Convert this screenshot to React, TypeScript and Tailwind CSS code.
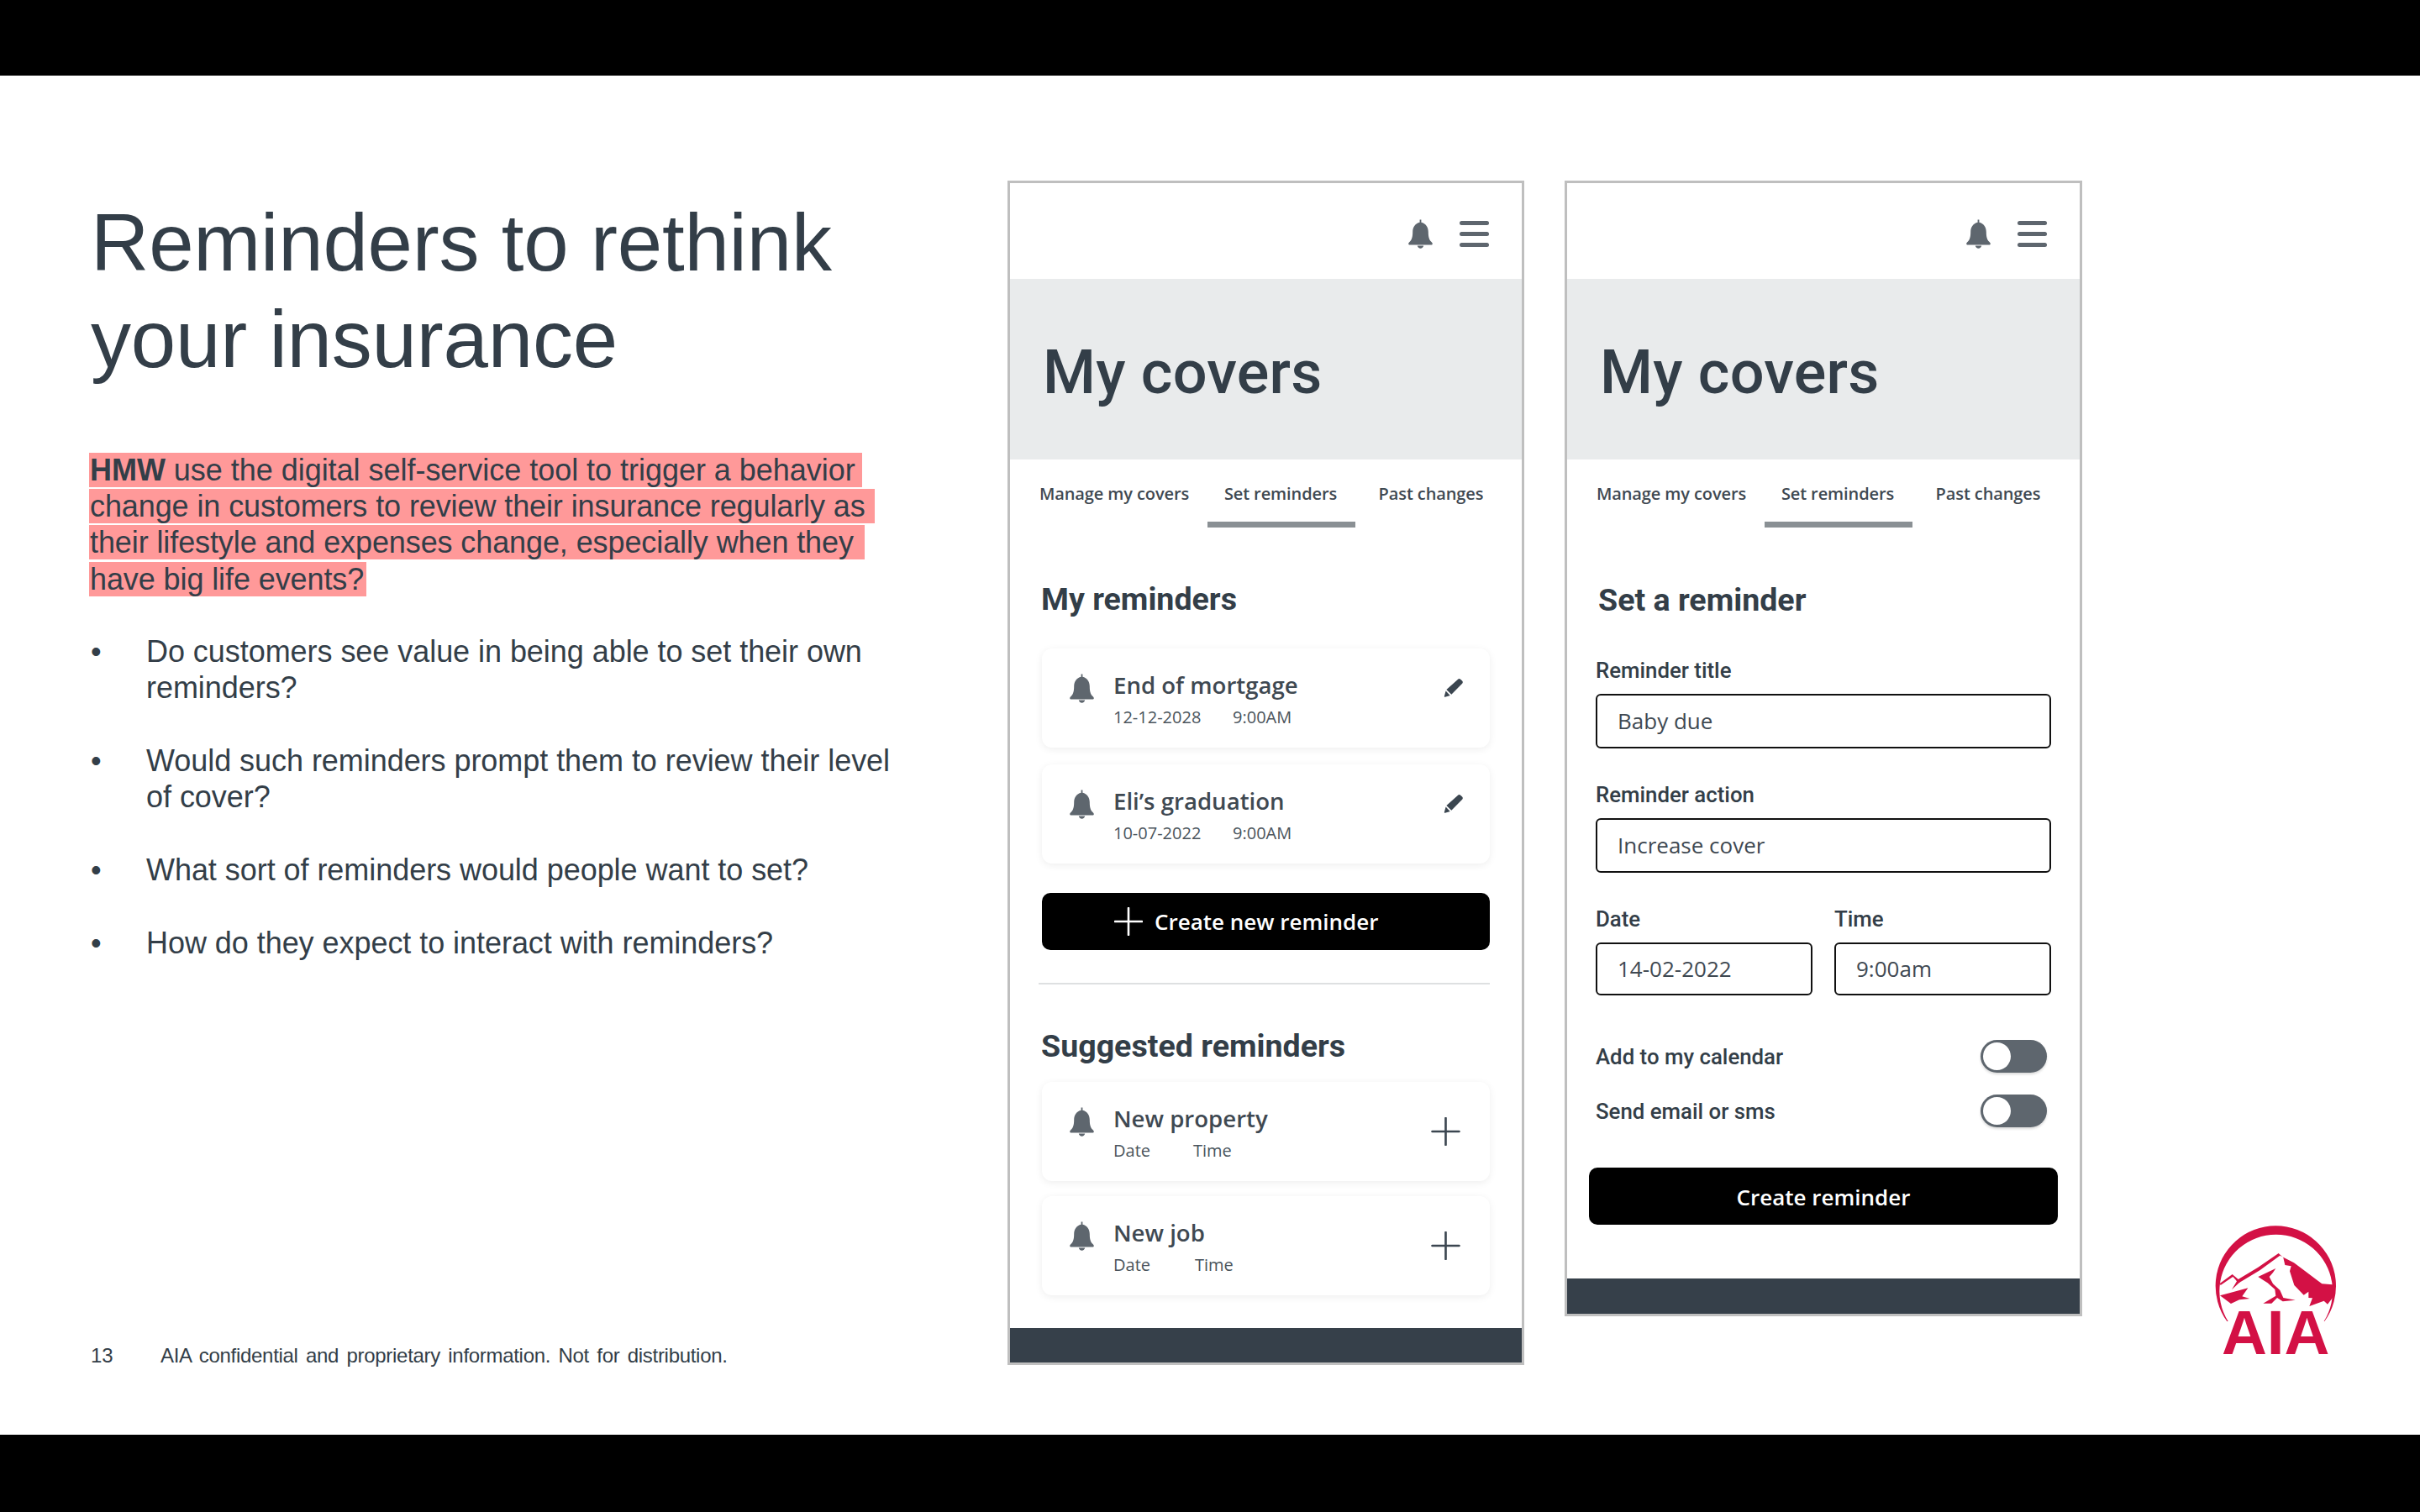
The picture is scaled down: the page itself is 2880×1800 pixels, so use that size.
import React from "react";

const sans = "font-['Liberation_Sans',Arial,sans-serif]";
const open = "font-['Open_Sans',sans-serif]";
const robo = "font-['Roboto',sans-serif]";

function Bell({ className }: { className: string }) {
  return (
    <svg viewBox="0 0 29 35" className={className} fill="#5e666e">
      <path d="M13.6 0.5h1.8v3.2C20.6 4.8 23.8 9.3 23.8 15c0 6.4 1.2 9.4 3.2 11.6 1.2 1.3 1.8 2 1.8 2.6 0 .8-.7 1.3-1.6 1.3H1.8C.9 30.5.2 30 .2 29.2c0-.6.6-1.3 1.8-2.6C4 24.4 5.2 21.4 5.2 15c0-5.7 3.2-10.2 8.4-11.3z" />
      <path d="M10.8 31.6h7.4c-.3 1.9-1.8 3.2-3.7 3.2s-3.4-1.3-3.7-3.2z" />
    </svg>
  );
}

function Pencil() {
  return (
    <svg viewBox="0 0 24 24" className="h-[23px] w-[24px] shrink-0" fill="#3b4650">
      <path d="M17 2c1-1 2.4-1.1 3.5-.3l1.8 1.6c1.2 1 1.3 2.6.3 3.7L9.2 20.6 3 14.6z" />
      <path d="M2.2 16.2l5.4 5.6-6.3 1.9c-.6.2-1.1-.4-.9-1z" />
    </svg>
  );
}

function Plus({ color, className }: { color: string; className: string }) {
  return (
    <svg viewBox="0 0 34 34" className={className} stroke={color} strokeWidth="2.6" fill="none" strokeLinecap="round">
      <path d="M17 1v32M1 17h32" />
    </svg>
  );
}

function PhoneTop() {
  return (
    <>
      <div className="flex h-[114px] items-center justify-end gap-[32px] pr-[39px] pt-[6px]">
        <Bell className="h-[35px] w-[29px]" />
        <div className="flex w-[35px] flex-col gap-[8px]">
          <div className="h-[5px] rounded-full bg-[#5e666e]" />
          <div className="h-[5px] rounded-full bg-[#5e666e]" />
          <div className="h-[5px] rounded-full bg-[#5e666e]" />
        </div>
      </div>
      <div className="flex h-[215px] items-center bg-[#e9ebec] pl-[39px]">
        <h1 className={`${robo} mt-[9px] text-[72px] leading-[84px] font-medium tracking-[0.25px] text-[#333e48]`}>My covers</h1>
      </div>
      <div className={`${open} flex h-[81px] pl-[13px] text-[20px] leading-[30px] font-semibold tracking-[-0.1px] text-[#3f4952]`}>
        <div className="w-[222px] pt-[26px] text-center">Manage my covers</div>
        <div className="w-[176px] border-b-[7px] border-[#8a9094] pt-[26px] pr-[2px] text-center">Set reminders</div>
        <div className="w-[180px] pt-[26px] text-center">Past changes</div>
      </div>
    </>
  );
}

function Card({
  title,
  date,
  time,
  dateW,
  edit,
  mt,
}: {
  title: string;
  date: string;
  time: string;
  dateW: string;
  edit?: boolean;
  mt: string;
}) {
  return (
    <div className={`${mt} flex h-[118px] rounded-[12px] bg-white pl-[33px] shadow-[0_2px_10px_rgba(0,0,0,0.07)] ${edit ? "pr-[31px]" : "pr-[35px]"}`}>
      <Bell className="mt-[30px] h-[35px] w-[29px] shrink-0" />
      <div className={`${open} ml-[23px] flex-1 pt-[24px]`}>
        <div className="text-[27.6px] leading-[38px] font-semibold text-[#3f4952]">{title}</div>
        <div className="mt-[6px] flex text-[20px] leading-[28px] text-[#4a545c]">
          <span className={dateW}>{date}</span>
          <span>{time}</span>
        </div>
      </div>
      {edit ? (
        <div className="pt-[35px]">
          <Pencil />
        </div>
      ) : (
        <div className="pt-[42px]">
          <Plus color="#3b4650" className="h-[34px] w-[35px]" />
        </div>
      )}
    </div>
  );
}

function Field({ label, value, mt, h, className }: { label: string; value: string; mt: string; h: string; className?: string }) {
  return (
    <div className={`${mt} ${className ?? ""}`}>
      <div className={`${robo} text-[25.8px] leading-[30px] font-medium text-[#333e48]`}>{label}</div>
      <div className={`${open} ${h} mt-[13px] flex items-center rounded-[6px] border-2 border-[#111] pl-[24px] text-[26px] text-[#3f4952]`}>{value}</div>
    </div>
  );
}

function Toggle() {
  return (
    <div className="relative h-[39px] w-[79px] rounded-full bg-[#5e666e] shadow-[0_2px_3px_rgba(0,0,0,0.15)]">
      <div className="absolute top-[3px] left-[3px] h-[33px] w-[33px] rounded-full bg-white" />
    </div>
  );
}

function Logo() {
  return (
    <svg viewBox="0 0 600 600" className="h-[200px] w-[200px]" fill="#d31145">
      <path d="M151 429A215 215 0 1 1 499 429L497 429A202 202 0 1 0 155 429Z" />
      <path d="M125 294L170 261L191 279L262 236L335 186L352 202L358 228L380 232L375 250L391 300L425 335L442 323L442 345L456 346L445 375L497 356L510 368L532 340L538 302L527 298L490 295L430 250L390 220L340 194L268 247L193 292L172 270L128 300Z" />
      <path d="M172 266L198 288L168 316L186 286Z" />
      <path d="M262 270L325 240L315 255L302 270L315 295L340 318L352 345L395 353L350 358L330 345L310 365L280 365L325 338L322 315L296 292Z" />
      <path d="M126 337L160 328L226 310L205 340L232 348L195 352L165 366Z" />
      <text x="324.5" y="545" textAnchor="middle" fontFamily="'Liberation Sans',Arial,sans-serif" fontWeight="700" fontSize="224">AIA</text>
    </svg>
  );
}

export default function App() {
  return (
    <div className="flex h-[1800px] w-[2880px] flex-col bg-black">
      <div className="h-[90px]" />
      <div className="flex h-[1618px] bg-white">
        <div className={`${sans} flex w-[1199px] shrink-0 flex-col pl-[108px] text-[#333e48]`}>
          <h1 className="mt-[141px] text-[96px] leading-[115px] tracking-[-0.2px]">
            Reminders to rethink
            <br />
            your insurance
          </h1>
          <div className="mt-[78px] flex flex-col items-start gap-[2.2px] text-[36px] tracking-[-0.1px]">
            <span className="-ml-[2px] h-[41px] bg-[#ff9999] pr-[8px] pl-[1px] leading-[41px] tracking-[-0.03px]"><b>HMW</b> use the digital self-service tool to trigger a behavior</span>
            <span className="-ml-[2px] h-[41px] bg-[#ff9999] pr-[11px] pl-[1px] leading-[41px]">change in customers to review their insurance regularly as</span>
            <span className="-ml-[2px] h-[41px] bg-[#ff9999] pr-[13px] pl-[1px] leading-[41px]">their lifestyle and expenses change, especially when they</span>
            <span className="-ml-[2px] h-[41px] bg-[#ff9999] pr-[3px] pl-[1px] leading-[41px]">have big life events?</span>
          </div>
          <ul className="mt-[44px] flex flex-col gap-[44px] text-[36px] leading-[43px] tracking-[-0.05px]">
            {[
              ["Do customers see value in being able to set their own", "reminders?"],
              ["Would such reminders prompt them to review their level", "of cover?"],
              ["What sort of reminders would people want to set?"],
              ["How do they expect to interact with reminders?"],
            ].map((lines) => (
              <li key={lines[0]} className="flex">
                <span className="w-[66px] shrink-0">•</span>
                <span>
                  {lines.map((l, i) => (
                    <span key={l}>
                      {i > 0 && <br />}
                      {l}
                    </span>
                  ))}
                </span>
              </li>
            ))}
          </ul>
          <div className="mt-auto mb-[80px] flex text-[24px] leading-[28px]">
            <span className="w-[83px]">13</span>
            <span className="tracking-[-0.3px] [word-spacing:3px]">AIA confidential and proprietary information. Not for distribution.</span>
          </div>
        </div>

        <div className="mt-[125px] flex h-[1410px] w-[615px] shrink-0 flex-col border-[3px] border-[#bfbfbf]">
          <PhoneTop />
          <div className="pr-[38px] pl-[38px]">
            <h2 className={`${robo} mt-[63px] -ml-[1px] text-[37.6px] leading-[44px] font-bold text-[#333e48]`}>My reminders</h2>
            <Card mt="mt-[37px]" title="End of mortgage" date="12-12-2028" time="9:00AM" dateW="w-[142px]" edit />
            <Card mt="mt-[20px]" title="Eli’s graduation" date="10-07-2022" time="9:00AM" dateW="w-[142px]" edit />
            <div className={`${open} mt-[35px] flex h-[68px] items-center rounded-[10px] bg-black pl-[86px] text-[26px] font-semibold text-white`}>
              <Plus color="#fff" className="h-[34px] w-[34px]" />
              <span className="ml-[14px]">Create new reminder</span>
            </div>
            <div className="mt-[39px] -ml-[4px] h-[2px] bg-[#dee0e1]" />
            <h2 className={`${robo} mt-[51px] -ml-[1px] text-[37.6px] leading-[44px] font-bold text-[#333e48]`}>Suggested reminders</h2>
            <Card mt="mt-[21px]" title="New property" date="Date" time="Time" dateW="w-[95px]" />
            <Card mt="mt-[18px]" title="New job" date="Date" time="Time" dateW="w-[97px]" />
          </div>
          <div className="mt-auto h-[41px] bg-[#36404a]" />
        </div>

        <div className="mt-[125px] ml-[48px] flex h-[1352px] w-[616px] shrink-0 flex-col border-[3px] border-[#bfbfbf]">
          <PhoneTop />
          <div className="pr-[34px] pl-[34px]">
            <h2 className={`${robo} mt-[64px] ml-[3px] text-[37.6px] leading-[44px] font-bold text-[#333e48]`}>Set a reminder</h2>
            <Field mt="mt-[47px]" label="Reminder title" value="Baby due" h="h-[65px]" />
            <Field mt="mt-[40px]" label="Reminder action" value="Increase cover" h="h-[65px]" />
            <div className="mt-[40px] flex gap-[26px]">
              <Field mt="" className="flex-1" label="Date" value="14-02-2022" h="h-[63px]" />
              <Field mt="" className="flex-1" label="Time" value="9:00am" h="h-[63px]" />
            </div>
            <div className={`${robo} mt-[53px] flex w-[537px] items-center justify-between text-[25.8px] leading-[30px] font-medium text-[#333e48]`}>
              <span>Add to my calendar</span>
              <Toggle />
            </div>
            <div className={`${robo} mt-[26px] flex w-[537px] items-center justify-between text-[25.8px] leading-[30px] font-medium text-[#333e48]`}>
              <span>Send email or sms</span>
              <Toggle />
            </div>
            <div className={`${open} mt-[48px] -ml-[8px] flex h-[68px] w-[558px] items-center justify-center rounded-[10px] bg-black pt-[3px] text-[26px] font-semibold text-white`}>
              Create reminder
            </div>
          </div>
          <div className="mt-auto h-[42px] bg-[#36404a]" />
        </div>

        <div className="ml-[122px] self-end pb-[78px]">
          <Logo />
        </div>
      </div>
      <div className="h-[92px]" />
    </div>
  );
}
